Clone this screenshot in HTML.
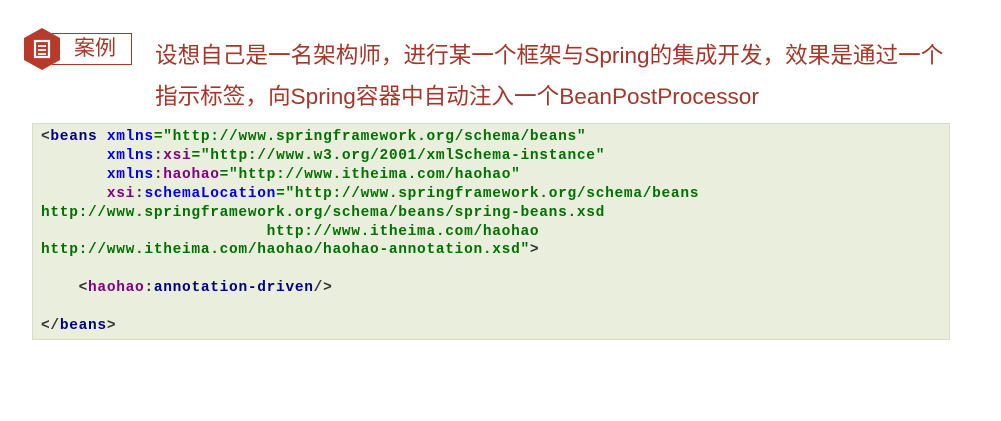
<!DOCTYPE html>
<html><head><meta charset="utf-8"><style>
body{margin:0;width:1001px;height:421px;background:#fff;position:relative;overflow:hidden;font-family:"Liberation Sans","Noto Sans CJK SC",sans-serif}
.hdr{position:absolute;color:#a3372c;font-size:22.6px;left:155px;white-space:nowrap}
.tag{position:absolute;left:52px;top:33px;width:80px;height:32px;border:1px solid #a3372c;box-sizing:border-box;color:#a3372c;font-size:21px;line-height:30px;padding-left:21px}
.code{position:absolute;left:32px;top:123px;width:918px;height:217px;box-sizing:border-box;background:#eaeedc;border:1px solid #d8dccb;padding:4px 0 0 8px}
pre{margin:0;font-family:"Liberation Mono",monospace;font-weight:bold;font-size:14.5px;letter-spacing:0.7px;line-height:18.9px;color:#007000}
.e{color:#000080}.a{color:#0000e0}.n{color:#800080}.p{color:#333}
</style></head><body>
<div class="tag">案例</div>
<svg style="position:absolute;left:23px;top:27px" width="38" height="44" viewBox="0 0 38 44"><polygon points="19,1 37,11 37,33 19,43 1,33 1,11" fill="#b83a2a"/><rect x="12" y="14" width="14" height="16" fill="none" stroke="#fff" stroke-width="2.2"/><line x1="15" y1="19" x2="23" y2="19" stroke="#fff" stroke-width="1.8"/><line x1="15" y1="23" x2="23" y2="23" stroke="#fff" stroke-width="1.8"/><line x1="15" y1="27" x2="23" y2="27" stroke="#fff" stroke-width="1.8"/></svg>
<div class="hdr" style="top:37px">设想自己是一名架构师，进行某一个框架与Spring的集成开发，效果是通过一个</div>
<div class="hdr" style="top:78px">指示标签，向Spring容器中自动注入一个BeanPostProcessor</div>
<div class="code"><pre><span class="p">&lt;</span><span class="e">beans</span> <span class="a">xmlns</span>="http://www.springframework.org/schema/beans"
       <span class="a">xmlns</span><span class="p">:</span><span class="n">xsi</span>="http://www.w3.org/2001/xmlSchema-instance"
       <span class="a">xmlns</span><span class="p">:</span><span class="n">haohao</span>="http://www.itheima.com/haohao"
       <span class="n">xsi</span><span class="p">:</span><span class="a">schemaLocation</span>="http://www.springframework.org/schema/beans
http://www.springframework.org/schema/beans/spring-beans.xsd
                        http://www.itheima.com/haohao
http://www.itheima.com/haohao/haohao-annotation.xsd"<span class="p">&gt;</span>

    <span class="p">&lt;</span><span class="n">haohao</span><span class="p">:</span><span class="e">annotation-driven</span><span class="p">/&gt;</span>

<span class="p">&lt;/</span><span class="e">beans</span><span class="p">&gt;</span></pre></div>
</body></html>
